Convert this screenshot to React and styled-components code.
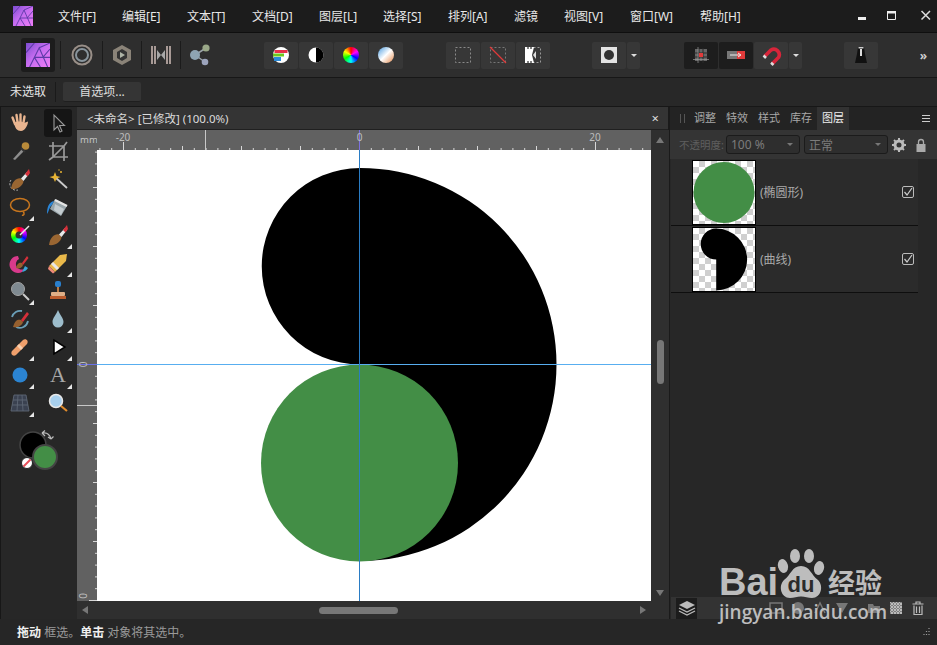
import React from 'react';
import styled, { createGlobalStyle } from 'styled-components';

const GlobalStyle = createGlobalStyle`
    html, body { margin: 0; padding: 0; background: #1b1b1b; }
    * { box-sizing: border-box; }
`;

const Window = styled.div`
    width: 937px;
    height: 645px;
    position: relative;
    overflow: hidden;
    display: flex;
    flex-direction: column;
    background: #282828;
    color: #ddd;
    font-family: "Noto Sans", "Noto Sans CJK SC", sans-serif;
    font-size: 12px;
`;

const MenuBar = styled.div`
    height: 33px;
    flex: none;
    display: flex;
    align-items: center;
    background: #1c1c1c;
    border-bottom: 1px solid #0f0f0f;
    padding-left: 13px;
`;

const MenuList = styled.div`
    display: flex;
    margin-left: 25px;
    flex: 1;
`;

const MenuItem = styled.span`
    width: ${p => p.$w}px;
    color: #e8e8e8;
    white-space: nowrap;
    line-height: 18px;
    position: relative;
    top: 1px;
`;

const WindowButtons = styled.svg`
    flex: none;
    display: block;
`;

const Toolbar = styled.div`
    height: 45px;
    flex: none;
    display: flex;
    align-items: center;
    background: #2e2e2e;
    border-bottom: 1px solid #171717;
    padding-left: 21px;
`;

const AppTile = styled.div`
    width: 34px;
    height: 34px;
    background: #1c1c1c;
    border-radius: 3px;
    display: flex;
    align-items: center;
    justify-content: center;
`;

const BarSep = styled.div`
    width: 1px;
    height: 28px;
    background: #1b1b1b;
`;

const BarIcon = styled.div`
    width: ${p => p.$w}px;
    height: 34px;
    display: flex;
    align-items: center;
    justify-content: center;
`;

const Segment = styled.div`
    margin-left: ${p => p.$ml}px;
    display: flex;
    gap: 1px;
    height: 27px;
`;

const Cell = styled.div`
    width: ${p => p.$narrow ? 13 : 34}px;
    height: 27px;
    background: ${p => p.$dark ? '#1d1d1d' : '#373737'};
    border-radius: 2px;
    display: flex;
    align-items: center;
    justify-content: center;
`;

const Caret = styled.span`
    width: 0;
    height: 0;
    border-left: 3px solid transparent;
    border-right: 3px solid transparent;
    border-top: 3px solid #ddd;
`;

const Wheel = styled.span`
    display: block;
    width: 16px;
    height: 16px;
    border-radius: 50%;
    background: conic-gradient(#f00, #f0f, #00f, #0ff, #0f0, #ff0, #f00);
`;

const More = styled.span`
    margin-left: auto;
    margin-right: 10px;
    color: #ccc;
    font-size: 12px;
    font-weight: 700;
`;

const ContextBar = styled.div`
    height: 29px;
    flex: none;
    display: flex;
    align-items: center;
    background: #282828;
    border-bottom: 1px solid #171717;
    padding-left: 10px;
`;

const ContextLabel = styled.span`
    width: 46px;
    color: #e4e4e4;
    border-right: 1px solid #1a1a1a;
    line-height: 20px;
`;

const PrefButton = styled.div`
    width: 78px;
    height: 20px;
    margin-left: 7px;
    background: #353535;
    border-bottom: 1px solid #1f1f1f;
    border-radius: 2px;
    text-align: center;
    line-height: 19px;
    color: #ddd;
`;

const Main = styled.div`
    flex: 1;
    min-height: 0;
    display: flex;
`;

const ToolPanel = styled.div`
    width: 77px;
    flex: none;
    background: #272727;
    border-left: 1px solid #171717;
    padding: 2px 0 0 5px;
`;

const ToolGrid = styled.div`
    display: grid;
    grid-template-columns: 28px 28px;
    grid-auto-rows: 28px;
    column-gap: 10px;
`;

const Tool = styled.div`
    position: relative;
    display: flex;
    align-items: center;
    justify-content: center;
    border-radius: 3px;
    background: ${p => p.$active ? '#151515' : 'transparent'};
    ${p => p.$corner && `
        &::after {
            content: "";
            position: absolute;
            right: 0;
            bottom: 0;
            width: 0;
            height: 0;
            border-left: 5px solid transparent;
            border-bottom: 5px solid #e6e6e6;
        }
    `}
`;

const TextTool = styled.span`
    font-family: "Liberation Serif", serif;
    font-size: 22px;
    line-height: 24px;
    color: #a8a8a8;
`;

const ColourWell = styled.svg`
    display: block;
    margin: 10px 0 0 10px;
`;

const DocArea = styled.div`
    width: 593px;
    flex: none;
    display: flex;
    flex-direction: column;
    background: #1a1a1a;
`;

const DocTab = styled.div`
    height: 23px;
    flex: none;
    width: 591px;
    padding: 0 9px 0 10px;
    display: flex;
    align-items: center;
    justify-content: space-between;
    background: #343434;
    border-bottom: 1px solid #202020;
    color: #dcdcdc;
    font-size: 11.5px;
`;

const CloseMark = styled.span`
    color: #ddd;
    font-size: 13px;
`;

const DocGrid = styled.div`
    flex: 1;
    min-height: 0;
    display: grid;
    grid-template-columns: 20px 554px 18px;
    grid-template-rows: 20px 451px 18px;
`;

const RulerBox = styled.div`
    background: #616161;
    color: #c4c4c4;
    line-height: 0;
`;

const UnitLabel = styled.div`
    padding: 10px 0 0 3px;
    font-size: 9.5px;
    white-space: nowrap;
`;

const Page = styled.div`
    background: #fff;
    line-height: 0;
`;

const VScroll = styled.div`
    grid-row: 1 / 3;
    grid-column: 3;
    position: relative;
    background: #2f2f2f;
`;

const VThumb = styled.div`
    position: absolute;
    left: 6px;
    top: 210px;
    width: 7px;
    height: 44px;
    background: #777;
    border-radius: 4px;
`;

const Arrow = styled.span`
    position: absolute;
    width: 0;
    height: 0;
    ${p => p.$dir === 'up' && `top: 7px; left: 5px; border-left: 4px solid transparent; border-right: 4px solid transparent; border-bottom: 6px solid #777;`}
    ${p => p.$dir === 'down' && `bottom: 5px; left: 5px; border-left: 4px solid transparent; border-right: 4px solid transparent; border-top: 6px solid #777;`}
    ${p => p.$dir === 'left' && `left: 5px; top: 5px; border-top: 4px solid transparent; border-bottom: 4px solid transparent; border-right: 6px solid #777;`}
    ${p => p.$dir === 'right' && `right: 23px; top: 5px; border-top: 4px solid transparent; border-bottom: 4px solid transparent; border-left: 6px solid #777;`}
`;

const HScroll = styled.div`
    grid-column: 1 / 4;
    grid-row: 3;
    position: relative;
    background: #2f2f2f;
`;

const HThumb = styled.div`
    position: absolute;
    left: 242px;
    top: 6px;
    width: 79px;
    height: 7px;
    background: #777;
    border-radius: 4px;
`;

const SidePanel = styled.div`
    flex: 1;
    display: flex;
    flex-direction: column;
    background: #272727;
`;

const TabRow = styled.div`
    height: 23px;
    flex: none;
    display: flex;
    align-items: stretch;
    background: #232323;
    padding-left: 7px;
    position: relative;
`;

const Grip = styled.span`
    width: 5px;
    margin: 7px 4px 7px 3px;
    border-left: 1px solid #555;
    border-right: 1px solid #555;
`;

const PanelTab = styled.div`
    width: 32px;
    text-align: center;
    font-size: 11px;
    line-height: 21px;
    color: ${p => p.$active ? '#f0f0f0' : '#a8a8a8'};
    background: ${p => p.$active ? '#323232' : 'transparent'};
`;

const PanelMenu = styled.span`
    position: absolute;
    right: 7px;
    top: 8px;
    width: 8px;
    height: 7px;
    border-top: 1px solid #ccc;
    border-bottom: 1px solid #ccc;
    background: linear-gradient(#ccc, #ccc) center / 100% 1px no-repeat;
`;

const OptionRow = styled.div`
    height: 29px;
    flex: none;
    display: flex;
    align-items: center;
    background: #343434;
    padding-left: 9px;
`;

const DimLabel = styled.span`
    width: 47px;
    color: #5f5f5f;
    font-size: 10.5px;
    white-space: nowrap;
`;

const SelectBox = styled.div`
    width: ${p => p.$w}px;
    height: 19px;
    margin-right: 4px;
    padding: 0 6px 0 4px;
    display: flex;
    align-items: center;
    justify-content: space-between;
    background: #2e2e2e;
    border: 1px solid #1b1b1b;
    border-radius: 3px;
    color: #7c7c7c;
`;

const DimCaret = styled(Caret)`
    border-top-color: #777;
`;

const OptionIcon = styled.span`
    margin-left: ${p => p.$ml}px;
    line-height: 0;
`;

const LayerList = styled.div`
    flex: 1;
    display: flex;
    flex-direction: column;
    margin-left: 1px;
`;

const LayerRow = styled.div`
    width: 247px;
    height: 67px;
    flex: none;
    display: flex;
    align-items: center;
    padding-left: 21px;
    background: #2b2b2b;
    border-bottom: 1px solid #0e0e0e;
`;

const Thumb = styled.div`
    width: 64px;
    height: 65px;
    flex: none;
    border: 1px solid #000;
    background: repeating-conic-gradient(#cfcfcf 0 25%, #fff 0 50%) 0 0 / 12px 12px;
    line-height: 0;
`;

const LayerName = styled.span`
    margin-left: 4px;
    flex: 1;
    color: #a9a9a9;
`;

const Check = styled.span`
    width: 12px;
    height: 12px;
    margin-right: 4px;
    border: 1px solid #bbb;
    border-radius: 2px;
    line-height: 0;
`;

const PanelFoot = styled.div`
    height: 22px;
    flex: none;
    display: flex;
    align-items: center;
    margin-left: 1px;
    padding-left: 5px;
    background: #333;
`;

const LayersButton = styled.div`
    width: 21px;
    height: 21px;
    background: #1c1c1c;
    display: flex;
    align-items: center;
    justify-content: center;
`;

const FootIcon = styled.span`
    margin-left: ${p => p.$ml}px;
    line-height: 0;
`;

const StatusBar = styled.div`
    height: 26px;
    flex: none;
    display: flex;
    align-items: center;
    justify-content: space-between;
    padding: 0 6px 0 17px;
    background: #262626;
    color: #9a9a9a;
    font-size: 12px;
`;

const StatusKey = styled.b`
    color: #f0f0f0;
    font-weight: 700;
`;

const Watermark = styled.div`
    position: absolute;
    left: 719px;
    top: 545px;
    width: 172px;
    height: 80px;
    color: #bdbdbd;
    pointer-events: none;
`;

const MarkBai = styled.span`
    position: absolute;
    left: 0;
    top: 15px;
    font-family: "Liberation Sans", sans-serif;
    font-weight: 700;
    font-size: 38px;
    line-height: 44px;
`;

const MarkPaw = styled.svg`
    position: absolute;
    left: 55px;
    top: 3px;
`;

const MarkCn = styled.span`
    position: absolute;
    left: 109px;
    top: 19px;
    font-family: "Noto Sans CJK SC", sans-serif;
    font-weight: 700;
    font-size: 27px;
    line-height: 36px;
    white-space: nowrap;
`;

const MarkUrl = styled.span`
    position: absolute;
    left: 0;
    top: 54px;
    font-family: "Open Sans", sans-serif;
    font-weight: 600;
    font-size: 19px;
    line-height: 26px;
    white-space: nowrap;
`;

const SHAPE = 'M360 168 A196.5 196.5 0 0 1 360 561 L360 364.5 A98.25 98.25 0 0 1 360 168 Z';
const GREEN = '#438e46';

const Logo = ({ size }) => (
    <svg width={size} height={size} viewBox="0 0 20 20">
        <defs>
            <linearGradient id={`aff${size}`} x1="0" y1="0" x2="1" y2="1">
                <stop offset="0" stopColor="#7b4bd0" />
                <stop offset="0.45" stopColor="#c56cf0" />
                <stop offset="1" stopColor="#f07df5" />
            </linearGradient>
        </defs>
        <rect width="20" height="20" fill={`url(#aff${size})`} />
        <path d="M0 8 L7 0 M3 20 L11 4 L18 20 M7 12 L20 12 M11 4 L20 0 M7 12 L12 20 M14 12 L20 5" stroke="#5d3aa8" strokeWidth="0.9" fill="none" />
    </svg>
);

const Ico = ({ children, s = 24, v = 24 }) => (
    <svg width={s} height={s} viewBox={`0 0 ${v} ${v}`}>{children}</svg>
);

const Brush = ({ ring }) => (
    <Ico>
        {ring && <path d="M3 13 A6.5 6.5 0 0 0 10 23" fill="none" stroke="#bbb" strokeWidth="1" strokeDasharray="2 1.5" />}
        <path d="M3 22 C4 14 9 10.5 13 11.5 L15.5 14 C15 19 9 23 3 22 Z" fill="#9a6632" />
        <path d="M13 11.5 L19 5 L21 7 L15.5 14 Z" fill="#e8e8e8" />
        <path d="M17 7 L21 2 L22 6 L19.5 9.5 Z" fill="#d5303a" />
    </Ico>
);

const tools = [
    { key: 'hand', icon: <Ico><path d="M7 13 L4.5 6.5 M9.5 11 L8.5 4 M12.5 11 L12.5 3.5 M15.5 11.5 L16.5 5.5" stroke="#e9b590" strokeWidth="2.4" strokeLinecap="round" /><path d="M6 12 C8 10 15 10 16 12 L20 10.5 C20 14 17 20 13 20 C9 20 7 17 6 12 Z" fill="#e9b590" /></Ico> },
    { key: 'move', active: true, icon: <Ico><path d="M8 4 L8 19 L11.5 15.5 L14 21 L16 20 L13.5 14.5 L18.5 14.5 Z" fill="#1a1a1a" stroke="#9a9a9a" strokeWidth="1.1" /></Ico> },
    { key: 'dropper', icon: <Ico><path d="M5 20 L14 10 L16 12 L7 21 Z" fill="#8d8d8d" /><circle cx="17.5" cy="7" r="3.8" fill="#b88a3a" /><path d="M13 9 L17 13" stroke="#333" strokeWidth="2" /></Ico> },
    { key: 'crop', icon: <Ico><path d="M7 3 V18 H22 M3 7 H18 V22 M7 18 L18 7 M3 21 L7 18 M18 7 L21 3" fill="none" stroke="#9a9a9a" strokeWidth="1.7" /></Ico> },
    { key: 'paint', icon: <Brush ring /> },
    { key: 'wand', icon: <Ico><path d="M10 11 L21 21" stroke="#ccc" strokeWidth="1.8" /><path d="M9 5 L10.5 9 L14.5 10 L10.5 11.5 L9 15 L7.5 11.5 L3.5 10 L7.5 9 Z" fill="#e8b434" /><circle cx="15" cy="5" r="1" fill="#e8b434" /><circle cx="13" cy="3" r="0.7" fill="#e8b434" /></Ico> },
    { key: 'lasso', corner: true, icon: <Ico><ellipse cx="12" cy="10" rx="9.5" ry="6.5" fill="none" stroke="#c8761e" strokeWidth="1.5" /><path d="M15 17 C17 18 16 21 14 20" fill="none" stroke="#c8761e" strokeWidth="1.5" /></Ico> },
    { key: 'fill', icon: <Ico><path d="M9 4 L21 11 L15 21 L4 14 Z" fill="#9aa6ab" /><path d="M9 5 L21 11" stroke="#e5e5e5" strokeWidth="2.4" /><path d="M9 9 L18 14 L15 20 L8 15 Z" fill="#c4ccd0" /><path d="M8 6 C3 7 1 12 1 19 C3 17 3 12 6 10 Z" fill="#2a86d8" /></Ico> },
    { key: 'colour', icon: <Ico><foreignObject x="3" y="4" width="17" height="17"><Wheel /></foreignObject><circle cx="11" cy="12" r="3.5" fill="#333" /><path d="M12 12 L21 3" stroke="#e8e8e8" strokeWidth="1.5" /></Ico> },
    { key: 'brush', corner: true, icon: <Brush /> },
    { key: 'pixel', icon: <Ico><path d="M10 5 A8.5 8.5 0 1 0 14 21 L16 18 A5.5 5.5 0 1 1 11 8 Z" fill="#d93a8c" /><path d="M14 21 A8 8 0 0 0 20 17 L17 15 Z" fill="#3aa6d9" /><path d="M8 17 C9 12 12 11 14 12 L15 14 C14 17 11 18 8 17 Z" fill="#96602f" /><path d="M14 12 L19 5 L20.5 7 L15 14 Z" fill="#d5303a" /></Ico> },
    { key: 'eraser', corner: true, icon: <Ico><path d="M3 15 L14 4 L21 3 L20 10 L9 21 Z" fill="#eab94a" /><path d="M3 15 L9 21 L7 22.5 L2 18 Z" fill="#f08a7a" /><path d="M6 12 L12 18" stroke="#e8e8e8" strokeWidth="3" /></Ico> },
    { key: 'zoomOut', corner: true, icon: <Ico><circle cx="10" cy="10" r="6.5" fill="#7f8a91" stroke="#a4a4a4" /><path d="M15 15 L21 21" stroke="#ccc" strokeWidth="2" /></Ico> },
    { key: 'stamp', icon: <Ico><rect x="9" y="2" width="6" height="6" rx="2" fill="#2a7fcc" /><rect x="11" y="8" width="2" height="6" fill="#bb7b45" /><rect x="5" y="13" width="14" height="4" rx="1" fill="#e0b088" /><rect x="4" y="17" width="16" height="3" fill="#bb5d2e" /></Ico> },
    { key: 'mixer', icon: <Ico><path d="M4 10 A8.5 8.5 0 0 1 14 4 M20 14 A8.5 8.5 0 0 1 8 20" fill="none" stroke="#6a9fb8" strokeWidth="1.8" /><path d="M5 20 C7 13 10 12 13 13 L15 15 C14 19 9 21 5 20 Z" fill="#96602f" /><path d="M13 13 L19 5 L21 7 L15 15 Z" fill="#d5303a" /></Ico> },
    { key: 'drop', corner: true, icon: <Ico><path d="M12 3 C14 8 17.5 11 17.5 15 A5.5 5.5 0 0 1 6.5 15 C6.5 11 10 8 12 3 Z" fill="#9dbdcc" /></Ico> },
    { key: 'plaster', corner: true, icon: <Ico><path d="M4 16 L15 5 C18 3 21 6 19 9 L8 20 C5 22 2 19 4 16 Z" fill="#f0a06c" /><path d="M9 11 L13 15 L15 13 L11 9 Z" fill="#f8d0b0" /></Ico> },
    { key: 'node', corner: true, icon: <Ico><path d="M8 5 L8 19 L19 12 Z" fill="#fff" stroke="#000" strokeWidth="1.5" /></Ico> },
    { key: 'ellipse', corner: true, icon: <Ico><circle cx="12" cy="12" r="7.5" fill="#2b84d2" /></Ico> },
    { key: 'text', corner: true, icon: <TextTool>A</TextTool> },
    { key: 'mesh', corner: true, icon: <Ico><path d="M6 4 H18 L21 20 H3 Z M10 4 L9 20 M14 4 L15 20 M5 9 H19 M4 14 H20" fill="#3a4150" stroke="#5d6675" strokeWidth="0.9" /></Ico> },
    { key: 'zoom', icon: <Ico><circle cx="10" cy="10" r="6.5" fill="#a8d0ee" stroke="#e8e8e8" strokeWidth="1.5" /><path d="M15 15 L21 20" stroke="#e08b2c" strokeWidth="2.2" /></Ico> },
];

const menus = [
    ['文件[F]', 64], ['编辑[E]', 65], ['文本[T]', 65], ['文档[D]', 67], ['图层[L]', 64],
    ['选择[S]', 65], ['排列[A]', 66], ['滤镜', 50], ['视图[V]', 66], ['窗口[W]', 70], ['帮助[H]', 74],
];

const range = (a, b) => Array.from({ length: b - a + 1 }, (_, i) => a + i);

const TopRuler = () => (
    <svg width="554" height="20" viewBox="97 130 554 20">
        {range(-22, 25).map(n => {
            const x = 359.5 + n * 11.8;
            const len = n % 20 === 0 ? 8 : n % 5 === 0 ? 4 : 2;
            return <line key={n} x1={x} x2={x} y1={150 - len} y2={150} stroke="#d8d8d8" strokeWidth="1" />;
        })}
        <line x1="205.5" x2="205.5" y1="130" y2="150" stroke="#c8c8c8" />
        <line x1="359.5" x2="359.5" y1="130" y2="150" stroke="#7a70e0" />
        <text x="123" y="141" fill="#bdbdbd" fontSize="10" textAnchor="middle">-20</text>
        <text x="359.5" y="141" fill="#bdbdbd" fontSize="10" textAnchor="middle">0</text>
        <text x="595" y="141" fill="#bdbdbd" fontSize="10" textAnchor="middle">20</text>
    </svg>
);

const LeftRuler = () => (
    <svg width="20" height="451" viewBox="77 150 20 451">
        {range(-19, 20).map(n => {
            const y = 364.5 + n * 11.8;
            const len = n % 20 === 0 ? 8 : n % 5 === 0 ? 4 : 2;
            return <line key={n} x1={97 - len} x2={97} y1={y} y2={y} stroke="#d8d8d8" strokeWidth="1" />;
        })}
        <line x1="77" x2="97" y1="405.5" y2="405.5" stroke="#c8c8c8" />
        <line x1="77" x2="97" y1="364.5" y2="364.5" stroke="#6a70e8" />
        <text transform="translate(87 364.5) rotate(-90)" fill="#bdbdbd" fontSize="10" textAnchor="middle">0</text>
        <text transform="translate(87 596) rotate(-90)" fill="#bdbdbd" fontSize="10" textAnchor="middle">0</text>
    </svg>
);

const Artwork = () => (
    <svg width="554" height="451" viewBox="97 150 554 451">
        <path d={SHAPE} fill="#000" />
        <circle cx="359.5" cy="463" r="98.5" fill={GREEN} />
        <line x1="97" x2="651" y1="364.5" y2="364.5" stroke="#58aef0" />
        <line x1="359.5" x2="359.5" y1="150" y2="601" stroke="#2a7cc4" />
    </svg>
);

const App = () => (
    <Window>
        <GlobalStyle />
        <MenuBar>
            <Logo size={20} />
            <MenuList>
                {menus.map(([label, w]) => <MenuItem key={label} $w={w}>{label}</MenuItem>)}
            </MenuList>
            <WindowButtons width="84" height="32" viewBox="0 0 84 32">
                <rect x="5" y="17" width="8" height="3" fill="#eee" />
                <path d="M34.5 11.5 H42.5 V19.5 H34.5 Z" fill="none" stroke="#eee" />
                <rect x="34" y="11" width="9" height="2.5" fill="#eee" />
                <path d="M68.5 11 L77 19.5 M77 11 L68.5 19.5" stroke="#ddd" strokeWidth="1.5" />
            </WindowButtons>
        </MenuBar>

        <Toolbar>
            <AppTile><Logo size={24} /></AppTile>
            <BarIcon $w={5} />
            <BarSep />
            <BarIcon $w={41}>
                <Ico><circle cx="12" cy="12" r="9.5" fill="none" stroke="#998f88" strokeWidth="2" /><circle cx="12" cy="12" r="6" fill="none" stroke="#88949c" strokeWidth="2" /></Ico>
            </BarIcon>
            <BarSep />
            <BarIcon $w={38}>
                <Ico><path d="M12 2 L21 7 V17 L12 22 L3 17 V7 Z" fill="#8a8378" /><path d="M12 6 L17 9 V15 L12 18 L7 15 V9 Z" fill="#333" /><path d="M10 9 L15 12 L10 15 Z" fill="#aeb4a6" /></Ico>
            </BarIcon>
            <BarSep />
            <BarIcon $w={38}>
                <Ico><path d="M3 3 V21 M6 3 V21 M18 3 V21 M21 3 V21" stroke="#a89a96" strokeWidth="2" /><path d="M8 7 L12 12 L8 17 Z M16 7 L12 12 L16 17 Z" fill="#a8a8a8" /></Ico>
            </BarIcon>
            <BarSep />
            <BarIcon $w={38}>
                <Ico><path d="M7 12 L18 5 M7 12 L17 19" stroke="#9aa2a8" strokeWidth="1.5" /><circle cx="7" cy="12" r="5" fill="#8ea4b2" /><circle cx="18" cy="5" r="3.6" fill="#9aa888" /><circle cx="17" cy="19" r="3.3" fill="#9ca4bc" /></Ico>
            </BarIcon>

            <Segment $ml={45}>
                <Cell>
                    <Ico s={16} v={16}><circle cx="8" cy="8" r="8" fill="#fff" /><path d="M1.5 3 H14.5 V6 H1.5 Z" fill="#e8304a" /><path d="M0 6.5 H11 V9.5 H0 Z" fill="#6ec81e" /><path d="M1 10 H8 V14 H1 Z" fill="#2b8bd8" /></Ico>
                </Cell>
                <Cell>
                    <Ico s={16} v={16}><circle cx="8" cy="8" r="7.5" fill="#fff" /><path d="M8 .5 A7.5 7.5 0 0 1 8 15.5 Z" fill="#000" /></Ico>
                </Cell>
                <Cell><Wheel /></Cell>
                <Cell>
                    <Ico s={16} v={16}>
                        <defs><linearGradient id="lightG" x1="0" y1="0" x2="1" y2="1"><stop offset="0" stopColor="#4a9be0" /><stop offset="0.5" stopColor="#fff" /><stop offset="1" stopColor="#e58a4c" /></linearGradient></defs>
                        <circle cx="8" cy="8" r="8" fill="url(#lightG)" />
                    </Ico>
                </Cell>
            </Segment>

            <Segment $ml={43}>
                <Cell><Ico s={18} v={18}><rect x="1.5" y="1.5" width="15" height="15" fill="none" stroke="#8a8a8a" strokeDasharray="2 2" /></Ico></Cell>
                <Cell><Ico s={18} v={18}><rect x="1.5" y="1.5" width="15" height="15" fill="none" stroke="#777" strokeDasharray="2 2" /><path d="M1 1 L17 17" stroke="#e03a3a" strokeWidth="1.3" /></Ico></Cell>
                <Cell><Ico s={18} v={18}><rect x="1.5" y="1.5" width="15" height="15" fill="none" stroke="#999" strokeDasharray="2 2" /><path d="M1 1 H10 L8 9 L10 17 H1 Z" fill="#fff" /><path d="M4 1 V3 M7 1 V3 M4 15 V17 M7 15 V17" stroke="#000" /><path d="M12 5 L9 9 L12 13 Z" fill="#ddd" /></Ico></Cell>
            </Segment>

            <Segment $ml={42}>
                <Cell>
                    <Ico s={16} v={16}><rect width="16" height="16" fill="#e4e4e4" /><circle cx="8" cy="8" r="5" fill="#333" /></Ico>
                </Cell>
                <Cell $narrow><Caret /></Cell>
            </Segment>

            <Segment $ml={44}>
                <Cell $dark>
                    <Ico s={18} v={18}><path d="M3 3 H15 V15 H3 Z" fill="#666" /><path d="M7 2 V17 M11 2 V17 M2 7 H16 M2 11 H16" stroke="#2a2a2a" /><rect x="7" y="7" width="4" height="4" fill="#e03a3a" /><path d="M1 13.5 H17 M6 1 V17" stroke="#999" strokeWidth="0.7" /></Ico>
                </Cell>
                <Cell $dark>
                    <Ico s={18} v={18}><rect x="0" y="5" width="10" height="8" fill="#777" /><rect x="10" y="5" width="8" height="8" fill="#e03a3a" /><path d="M3 9 H13 M11 7 L14 9 L11 11" fill="none" stroke="#eee" /></Ico>
                </Cell>
                <Cell>
                    <Ico s={22} v={22}><path d="M4.5 12.5 L11 6 A5.5 5.5 0 0 1 18.5 13.5 L12 20" fill="none" stroke="#d8253a" strokeWidth="3.6" /><path d="M3.5 11.5 L6 14 M11 18.8 L13.5 21" stroke="#ddd" strokeWidth="2.5" /></Ico>
                </Cell>
                <Cell $narrow><Caret /></Cell>
            </Segment>

            <Segment $ml={42}>
                <Cell>
                    <Ico s={18} v={18}><path d="M6 1 H12 L13 8 L15 17 H3 L5 8 Z" fill="#111" /><path d="M8 3 H10 V10 H8 Z" fill="#ddd" /><path d="M6.5 1 H11.5 V2.5 H6.5 Z" fill="#ccc" /></Ico>
                </Cell>
            </Segment>
            <More>»</More>
        </Toolbar>

        <ContextBar>
            <ContextLabel>未选取</ContextLabel>
            <PrefButton>首选项...</PrefButton>
        </ContextBar>

        <Main>
            <ToolPanel>
                <ToolGrid>
                    {tools.map(t => (
                        <Tool key={t.key} $active={t.active} $corner={t.corner}>{t.icon}</Tool>
                    ))}
                </ToolGrid>
                <ColourWell width="50" height="50" viewBox="0 0 50 50">
                    <circle cx="17" cy="18" r="13" fill="#000" stroke="#444" strokeWidth="1.5" />
                    <path d="M26 6 C31 5 34 8 35 12 M26 6 L29 3.5 M26 6 L29 9 M35 12 L32 10 M35 12 L37.5 9.5" fill="none" stroke="#bbb" strokeWidth="1.2" />
                    <circle cx="29" cy="30" r="12" fill={GREEN} stroke="#444" strokeWidth="2" />
                    <circle cx="11" cy="36" r="5.5" fill="#fff" stroke="#222" />
                    <path d="M7.5 39.5 L14.5 32.5" stroke="#e8505a" strokeWidth="2" />
                </ColourWell>
            </ToolPanel>

            <DocArea>
                <DocTab>
                    <span>&lt;未命名&gt; [已修改] (100.0%)</span>
                    <CloseMark>×</CloseMark>
                </DocTab>
                <DocGrid>
                    <RulerBox><UnitLabel>mm</UnitLabel></RulerBox>
                    <RulerBox><TopRuler /></RulerBox>
                    <VScroll>
                        <Arrow $dir="up" />
                        <VThumb />
                        <Arrow $dir="down" />
                    </VScroll>
                    <RulerBox><LeftRuler /></RulerBox>
                    <Page><Artwork /></Page>
                    <HScroll>
                        <Arrow $dir="left" />
                        <HThumb />
                        <Arrow $dir="right" />
                    </HScroll>
                </DocGrid>
            </DocArea>

            <SidePanel>
                <TabRow>
                    <Grip />
                    <PanelTab>调整</PanelTab>
                    <PanelTab>特效</PanelTab>
                    <PanelTab>样式</PanelTab>
                    <PanelTab>库存</PanelTab>
                    <PanelTab $active>图层</PanelTab>
                    <PanelMenu />
                </TabRow>
                <OptionRow>
                    <DimLabel>不透明度:</DimLabel>
                    <SelectBox $w={74}>100 %<DimCaret /></SelectBox>
                    <SelectBox $w={84}>正常<DimCaret /></SelectBox>
                    <OptionIcon $ml={0}>
                        <Ico s={14} v={14}><circle cx="7" cy="7" r="4" fill="none" stroke="#bbb" strokeWidth="3" /><path d="M7 0 V14 M0 7 H14 M2 2 L12 12 M12 2 L2 12" stroke="#bbb" strokeWidth="2" strokeDasharray="2 10 2 0" /></Ico>
                    </OptionIcon>
                    <OptionIcon $ml={8}>
                        <Ico s={14} v={14}><rect x="2.5" y="6" width="9" height="8" fill="#aaa" /><path d="M4.5 6 V4 A2.5 2.5 0 0 1 9.5 4 V6" fill="none" stroke="#aaa" strokeWidth="1.3" /></Ico>
                    </OptionIcon>
                </OptionRow>
                <LayerList>
                    <LayerRow>
                        <Thumb>
                            <svg width="62" height="63" viewBox="261 365 197 197"><circle cx="359.5" cy="463.5" r="97" fill={GREEN} /></svg>
                        </Thumb>
                        <LayerName>(椭圆形)</LayerName>
                        <Check><Ico s={10} v={10}><path d="M1.5 5 L4 8 L9 1" fill="none" stroke="#ccc" strokeWidth="1.2" /></Ico></Check>
                    </LayerRow>
                    <LayerRow>
                        <Thumb>
                            <svg width="62" height="63" viewBox="212.5 167.5 394 394"><path d={SHAPE} fill="#000" /></svg>
                        </Thumb>
                        <LayerName>(曲线)</LayerName>
                        <Check><Ico s={10} v={10}><path d="M1.5 5 L4 8 L9 1" fill="none" stroke="#ccc" strokeWidth="1.2" /></Ico></Check>
                    </LayerRow>
                </LayerList>
                <PanelFoot>
                    <LayersButton>
                        <Ico s={18} v={18}><path d="M9 2 L17 6 L9 10 L1 6 Z" fill="#bbb" /><path d="M1 9 L9 13 L17 9 M1 12 L9 16 L17 12" fill="none" stroke="#bbb" strokeWidth="1.3" /></Ico>
                    </LayersButton>
                    <FootIcon $ml={72}>
                        <Ico s={14} v={14}><rect x="1" y="2" width="12" height="10" fill="none" stroke="#777" strokeWidth="1.5" /></Ico>
                    </FootIcon>
                    <FootIcon $ml={8}><Ico s={14} v={14}><circle cx="7" cy="7" r="6" fill="#777" /></Ico></FootIcon>
                    <FootIcon $ml={8}><Ico s={14} v={14}><path d="M2 12 L7 2 L12 12" fill="none" stroke="#777" strokeWidth="1.5" /></Ico></FootIcon>
                    <FootIcon $ml={8}><Ico s={14} v={14}><path d="M1 2 H13 L7 12 Z" fill="#777" /></Ico></FootIcon>
                    <FootIcon $ml={18}><Ico s={14} v={14}><path d="M1 3 H6 L7 5 H13 V12 H1 Z" fill="#777" /></Ico></FootIcon>
                    <FootIcon $ml={8}>
                        <Ico s={14} v={14}><rect x="1" y="1" width="12" height="12" fill="#bbb" /><path d="M1 3 H13 M1 6 H13 M1 9 H13 M1 12 H13 M3 1 V13 M6 1 V13 M9 1 V13 M12 1 V13" stroke="#444" strokeDasharray="1 2" /></Ico>
                    </FootIcon>
                    <FootIcon $ml={8}>
                        <Ico s={14} v={14}><path d="M1.5 3 H12.5 M5 3 V1 H9 V3 M3 4.5 V13.5 H11 V4.5 M5.5 5.5 V12 M8.5 5.5 V12" fill="none" stroke="#bbb" strokeWidth="1.2" /></Ico>
                    </FootIcon>
                </PanelFoot>
            </SidePanel>
        </Main>

        <StatusBar>
            <span><StatusKey>拖动</StatusKey> 框选。<StatusKey>单击</StatusKey> 对象将其选中。</span>
            <Ico s={10} v={10}><path d="M8 1 V2 M5.5 4 V5 M8 4 V5 M3 7 V8 M5.5 7 V8 M8 7 V8" stroke="#999" strokeWidth="1.2" /></Ico>
        </StatusBar>

        <Watermark>
            <MarkBai>Bai</MarkBai>
            <MarkPaw width="54" height="52" viewBox="0 0 54 52">
                <ellipse cx="21" cy="8" rx="5" ry="7" fill="#bdbdbd" />
                <ellipse cx="35" cy="8" rx="5" ry="7" fill="#bdbdbd" />
                <ellipse cx="9" cy="18" rx="5" ry="7" fill="#bdbdbd" transform="rotate(-15 9 18)" />
                <ellipse cx="45" cy="20" rx="5" ry="7" fill="#bdbdbd" transform="rotate(15 45 20)" />
                <path d="M27 18 C36 18 37 27 44 32 C50 38 47 50 38 50 C34 50 31 48.5 27 48.5 C23 48.5 20 50 16 50 C7 50 4 38 10 32 C17 27 18 18 27 18 Z" fill="#bdbdbd" />
                <text x="27" y="44" textAnchor="middle" fontFamily="Liberation Sans, sans-serif" fontWeight="700" fontSize="22" fill="#2b2b2b">du</text>
            </MarkPaw>
            <MarkCn>经验</MarkCn>
            <MarkUrl>jingyan.baidu.com</MarkUrl>
        </Watermark>
    </Window>
);

export default App;
